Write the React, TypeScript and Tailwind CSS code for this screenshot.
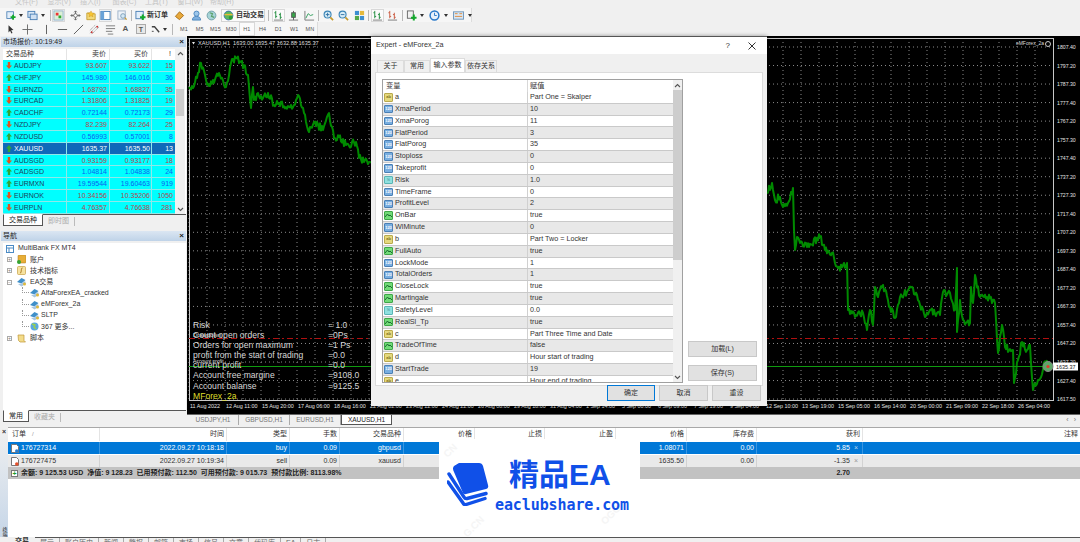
import React from 'react';

type Row = { sym: string; bid: string; ask: string; spread: string; dir: 'up' | 'down'; selected?: boolean };

const marketRows: Row[] = [
    { sym: 'AUDJPY', bid: '93.607', ask: '93.622', spread: '15', dir: 'down' },
    { sym: 'CHFJPY', bid: '145.980', ask: '146.016', spread: '36', dir: 'up' },
    { sym: 'EURNZD', bid: '1.68792', ask: '1.68827', spread: '35', dir: 'down' },
    { sym: 'EURCAD', bid: '1.31806', ask: '1.31825', spread: '19', dir: 'down' },
    { sym: 'CADCHF', bid: '0.72144', ask: '0.72173', spread: '29', dir: 'up' },
    { sym: 'NZDJPY', bid: '82.239', ask: '82.264', spread: '25', dir: 'down' },
    { sym: 'NZDUSD', bid: '0.56993', ask: '0.57001', spread: '8', dir: 'up' },
    { sym: 'XAUUSD', bid: '1635.37', ask: '1635.50', spread: '13', dir: 'up', selected: true },
    { sym: 'AUDSGD', bid: '0.93159', ask: '0.93177', spread: '18', dir: 'down' },
    { sym: 'CADSGD', bid: '1.04814', ask: '1.04838', spread: '24', dir: 'up' },
    { sym: 'EURMXN', bid: '19.59544', ask: '19.60463', spread: '919', dir: 'up' },
    { sym: 'EURNOK', bid: '10.34156', ask: '10.35206', spread: '1050', dir: 'down' },
    { sym: 'EURPLN', bid: '4.76357', ask: '4.76638', spread: '281', dir: 'down' },
];

type ParamKind = 'ab' | 'int' | 'dbl' | 'bool';

const params: [ParamKind, string, string][] = [
    ['ab', 'a', 'Part One = Skalper'],
    ['int', 'XmaPeriod', '10'],
    ['int', 'XmaPorog', '11'],
    ['int', 'FlatPeriod', '3'],
    ['int', 'FlatPorog', '35'],
    ['int', 'Stoploss', '0'],
    ['int', 'Takeprofit', '0'],
    ['dbl', 'Risk', '1.0'],
    ['int', 'TimeFrame', '0'],
    ['int', 'ProfitLevel', '2'],
    ['bool', 'OnBar', 'true'],
    ['int', 'WlMinute', '0'],
    ['ab', 'b', 'Part Two = Locker'],
    ['bool', 'FullAuto', 'true'],
    ['int', 'LockMode', '1'],
    ['int', 'TotalOrders', '1'],
    ['bool', 'CloseLock', 'true'],
    ['bool', 'Martingale', 'true'],
    ['dbl', 'SafetyLevel', '0.0'],
    ['bool', 'RealSl_Tp', 'true'],
    ['ab', 'c', 'Part Three Time and Date'],
    ['bool', 'TradeOfTime', 'false'],
    ['ab', 'd', 'Hour start of trading'],
    ['int', 'StartTrade', '19'],
    ['ab', 'e', 'Hour end of trading'],
];

const priceLabels = [
    '1807.40', '1797.20', '1787.30', '1777.40', '1767.20', '1757.30', '1747.40', '1737.20', '1727.30', '1717.40',
    '1707.20', '1697.30', '1687.40', '1677.20', '1667.30', '1657.40', '1647.20', '1637.20', '1627.40', '1617.50',
];

const timeLabels = [
    '11 Aug 2022', '12 Aug 11:00', '15 Aug 20:00', '17 Aug 06:00', '18 Aug 16:00', '22 Aug 02:00', '23 Aug 12:00', '24 Aug 22:00',
    '26 Aug 08:00', '29 Aug 18:00', '31 Aug 04:00', '1 Sep 14:00', '5 Sep 00:00', '6 Sep 09:00', '7 Sep 19:00', '9 Sep 04:00',
    '12 Sep 10:00', '13 Sep 19:00', '15 Sep 05:00', '16 Sep 14:00', '20 Sep 00:00', '21 Sep 09:00', '22 Sep 18:00', '26 Sep 04:00',
];

// rough trace of the price curve, in page pixels
const curve: [number, number][] = [
    [189, 87], [193, 88], [201, 63], [206, 80], [210, 86], [219, 73], [226, 87], [231, 63], [236, 58], [241, 62], [248, 75], [251, 108],
    [253, 87], [254, 100], [258, 93], [263, 98], [268, 93], [274, 105], [279, 103], [286, 107], [294, 105], [298, 95], [304, 113], [309, 132],
    [314, 122], [323, 130], [329, 113], [334, 138], [339, 137], [346, 145], [356, 142], [359, 158], [369, 162], [767, 193], [772, 183], [775, 200],
    [780, 197], [783, 207], [788, 203], [793, 188], [794, 230], [795, 250], [797, 237], [807, 247], [820, 237], [825, 250], [832, 253], [838, 268],
    [847, 263], [848, 310], [855, 317], [863, 313], [867, 330], [870, 310], [873, 325], [875, 287], [878, 297], [883, 285], [890, 307], [895, 318],
    [900, 297], [907, 292], [913, 288], [920, 305], [925, 317], [930, 310], [940, 315], [943, 292], [950, 293], [955, 310], [957, 268], [957, 332],
    [960, 300], [963, 320], [970, 323], [971, 287], [973, 303], [975, 275], [980, 297], [987, 297], [995, 303], [998, 353], [1002, 325], [1005, 347],
    [1013, 350], [1014, 383], [1018, 360], [1022, 342], [1027, 350], [1030, 345], [1033, 390], [1038, 380], [1047, 360],
];

const jitteredCurve = () => {
    let seed = 7;
    const next = () => {
        seed = (seed * 16807) % 2147483647;
        return (seed % 1000) / 1000 - 0.5;
    };
    const out: string[] = [];
    curve.forEach(([x, y], i) => {
        out.push(`${x},${y}`);
        const following = curve[i + 1];
        if (!following || following[0] - x > 100) return;
        const steps = Math.floor(Math.abs(following[0] - x));
        for (let s = 1; s < steps; s++) {
            const t = s / steps;
            out.push(`${x + (following[0] - x) * t},${y + (following[1] - y) * t + next() * 8}`);
        }
    });
    return out.join(' ');
};

const Tool = ({ w, children, pressed }: { w: string; children?: React.ReactNode; pressed?: boolean }) => (
    <div className={`${w} h-[14px] flex items-center justify-center shrink-0`}>
        {pressed ? (
            <div className="w-[13px] h-[13px] bg-[#fbfbfb] border border-[#d8d8d8] flex items-center justify-center">{children}</div>
        ) : children}
    </div>
);

const Sep = ({ w }: { w: string }) => (
    <div className={`${w} h-[14px] flex items-center justify-center shrink-0`}>
        <div className="w-px h-[11px] bg-[#b8b8b8]" />
    </div>
);

const Caret = () => <div className="w-0 h-0 border-x-[2px] border-x-transparent border-t-[3px] border-t-[#333]" />;

const Ic = ({ children }: { children: React.ReactNode }) => (
    <svg width="11" height="11" viewBox="0 0 12 12" fill="none">{children}</svg>
);

const DocPlus = () => (
    <Ic>
        <rect x="1" y="1.5" width="8" height="8" fill="#e3eefa" stroke="#4a7fb5" />
        <path d="M8.5 5v6M5.5 8h6" stroke="#13a82c" strokeWidth="2.2" />
    </Ic>
);
const Windows = () => (
    <Ic>
        <rect x="1" y="1.5" width="7.5" height="6.5" fill="#dbe8f6" stroke="#4a7fb5" />
        <rect x="3.5" y="4.5" width="7.5" height="6" fill="#cfe0f2" stroke="#4a7fb5" />
    </Ic>
);
const Magnifier = ({ sign }: { sign?: string }) => (
    <Ic>
        <circle cx="5" cy="5" r="3.8" fill="#d6ecf7" stroke="#3d86b8" strokeWidth="1.2" />
        <path d="M8 8l3 3" stroke="#c59a2e" strokeWidth="1.8" />
        {sign === '+' && <path d="M5 3v4M3 5h4" stroke="#2f6ea3" />}
        {sign === '-' && <path d="M3 5h4" stroke="#2f6ea3" />}
    </Ic>
);
const Bars = ({ color }: { color: string }) => (
    <Ic>
        <path d="M3 1v8M1.5 3H3M3 7h1.5M8 3v7M6.5 5H8M8 8h1.5" stroke={color} />
        <path d="M1 11h10" stroke="#777" />
    </Ic>
);

const ToolbarOne = () => (
    <div className="flex h-[14px] w-[472px] pl-[6px] bg-[#f6f6f6] border-r border-[#dcdcdc]">
        <Tool w="w-[10px]"><DocPlus /></Tool>
        <Tool w="w-[10px]"><Caret /></Tool>
        <Tool w="w-[12px]"><Windows /></Tool>
        <Tool w="w-[10px]"><Caret /></Tool>
        <Sep w="w-[4px]" />
        <Tool w="w-[12px]" pressed>
            <Ic><rect x="1" y="1" width="10" height="10" fill="#dcefd8" stroke="#8fb0c9" /><path d="M3 3h3v3H3z" fill="#e33" /><path d="M6 6h3v3H6z" fill="#3a3" /></Ic>
        </Tool>
        <Tool w="w-[22px]">
            <Ic><path d="M6 1v10M1 6h10M4.5 2.5L6 1l1.5 1.5M4.5 9.5L6 11l1.5-1.5M2.5 4.5L1 6l1.5 1.5M9.5 4.5L11 6 9.5 7.5" stroke="#666" /><circle cx="6" cy="6" r="2" fill="#fff" stroke="#666" /></Ic>
        </Tool>
        <Tool w="w-[10px]">
            <Ic><path d="M1 3h4l1 1h5v7H1z" fill="#f3d978" stroke="#c29a2c" /><path d="M6 .5l1.2 2.400 2.600.3-1.900 1.800.5 2.600L6 6.300 3.600 7.600l.5-2.600L2.200 3.200l2.600-.3z" fill="#f7c531" stroke="#c88d1c" strokeWidth=".5" /></Ic>
        </Tool>
        <Tool w="w-[18px]" pressed>
            <Ic><rect x="1" y="1.5" width="10" height="9" fill="#fff" stroke="#3d78b5" /><path d="M1 1.5h3.500v9H1z" fill="#6aa3d8" /></Ic>
        </Tool>
        <Tool w="w-[16px]">
            <Ic><rect x="1" y="1" width="8" height="9" fill="#eef3f8" stroke="#9db3c8" /><circle cx="6.5" cy="6.5" r="2.5" fill="#d5e9f5" stroke="#7a9cb8" /><path d="M8.5 8.5l2 2" stroke="#c79a33" strokeWidth="1.4" /></Ic>
        </Tool>
        <Sep w="w-[2px]" />
        <div className="w-[38px] h-[14px] flex items-center pl-[3px] gap-[1px] shrink-0">
            <DocPlus />
            <span className="text-[7px] font-bold text-[#333] whitespace-nowrap">新订单</span>
        </div>
        <Tool w="w-[18px]">
            <Ic><path d="M1.5 7L6 2l4.500 4L6 10.500z" fill="#e8a93b" stroke="#a8701a" /></Ic>
        </Tool>
        <Tool w="w-[16px]">
            <Ic><circle cx="6" cy="4" r="2.8" fill="#9dc6ea" stroke="#4a86bd" /><path d="M1.5 11c0-3 2-4 4.500-4s4.500 1 4.500 4z" fill="#7fb0df" stroke="#4a86bd" /></Ic>
        </Tool>
        <Tool w="w-[14px]">
            <Ic><circle cx="6" cy="6" r="4.8" fill="#a7d4d8" stroke="#6f9ea6" /><path d="M4 3l3 1-1 3 3 1" stroke="#5aa06a" strokeWidth="1.3" /></Ic>
        </Tool>
        <div className="w-[3px] shrink-0" />
        <div className="w-[44px] h-[13px] mt-[0.5px] bg-[#fbfbfb] border border-[#d4d4d4] flex items-center pl-[1px] gap-[2px] shrink-0">
            <Ic><circle cx="6" cy="6" r="4.8" fill="#5cb85c" stroke="#3b6fb0" /><path d="M1.5 5h9" stroke="#e8b93a" strokeWidth="1.5" /><circle cx="8.5" cy="8.5" r="2.2" fill="#2e9b35" /></Ic>
            <span className="text-[7px] font-bold text-[#333] whitespace-nowrap">自动交易</span>
        </div>
        <Sep w="w-[6px]" />
        <Tool w="w-[15px]" pressed><Bars color="#1d8a3a" /></Tool>
        <Tool w="w-[15px]">
            <Ic><path d="M6 1v10" stroke="#555" /><rect x="4" y="3" width="4" height="5" fill="#38a84a" stroke="#555" /><path d="M1 11h10" stroke="#777" /></Ic>
        </Tool>
        <Tool w="w-[16px]">
            <Ic><path d="M1 1v10h10" stroke="#777" /><path d="M2 9l2.500-5L7 6l3-1" stroke="#2e9b5a" /></Ic>
        </Tool>
        <Sep w="w-[3px]" />
        <Tool w="w-[16px]"><Magnifier sign="+" /></Tool>
        <Tool w="w-[15px]"><Magnifier sign="-" /></Tool>
        <Tool w="w-[16px]">
            <Ic><path d="M1 1h4.500v4.500H1z" fill="#3d8fd1" /><path d="M6.5 1H11v4.500H6.500z" fill="#e4b93d" /><path d="M1 6.5h4.500V11H1z" fill="#55a94a" /><path d="M6.5 6.500H11V11H6.500z" fill="#3d8fd1" /></Ic>
        </Tool>
        <Sep w="w-[2px]" />
        <Tool w="w-[16px]" pressed><Bars color="#1d8a3a" /></Tool>
        <Tool w="w-[15px]"><Bars color="#c8553a" /></Tool>
        <Sep w="w-[4px]" />
        <Tool w="w-[15px]">
            <Ic><rect x="1.5" y="1" width="6.5" height="8" fill="#f1f1f1" stroke="#666" /><path d="M8.5 5v6.500M5.500 8.500h6" stroke="#13a82c" strokeWidth="2.2" /></Ic>
        </Tool>
        <Tool w="w-[6px]"><Caret /></Tool>
        <Tool w="w-[18px]">
            <Ic><circle cx="6" cy="6" r="4.8" fill="#e8f1fb" stroke="#2878c8" strokeWidth="1.6" /><path d="M6 3v3h2.500" stroke="#2878c8" /></Ic>
        </Tool>
        <Tool w="w-[6px]"><Caret /></Tool>
        <Tool w="w-[18px]">
            <Ic><rect x=".5" y="2" width="11" height="8" fill="#d9e8f5" stroke="#6d94b8" /><path d="M2 4h3M7 4h3M2 7h8" stroke="#e08a3a" /></Ic>
        </Tool>
        <Tool w="w-[6px]"><Caret /></Tool>
    </div>
);

const tfItems = ['M1', 'M5', 'M15', 'M30', 'H1', 'H4', 'D1', 'W1', 'MN'];

const ToolbarTwo = () => (
    <div className="flex h-[14px] w-[318px] pl-[6px] bg-[#f6f6f6] border-r border-[#dcdcdc]">
        <Tool w="w-[10px]"><Ic><path d="M3 1l6 5.500-2.800.3 1.600 3.400-1.300.6-1.600-3.400L3 9.500z" fill="#333" /></Ic></Tool>
        <Tool w="w-[22px]"><Ic><path d="M6 .5v11M.5 6h11" stroke="#666" /></Ic></Tool>
        <Tool w="w-[16px]"><Ic><path d="M6 1v10" stroke="#555" /></Ic></Tool>
        <Tool w="w-[16px]"><Ic><path d="M1 6h10" stroke="#555" /></Ic></Tool>
        <Tool w="w-[16px]"><Ic><path d="M1 11L11 1" stroke="#555" /></Ic></Tool>
        <Tool w="w-[16px]">
            <Ic><path d="M1 10L9 2M3 11l8-8M1 7l6-6" stroke="#777" strokeDasharray="1 1" /><circle cx="3" cy="9" r="1" fill="#c33" /><circle cx="9" cy="3" r="1" fill="#c33" /></Ic>
        </Tool>
        <Tool w="w-[16px]"><Ic><path d="M1 2h10M1 5h10M1 8h7M3 11h6" stroke="#777" /></Ic></Tool>
        <Tool w="w-[15px]"><span className="text-[8px] font-bold text-[#555] leading-none">A</span></Tool>
        <Tool w="w-[16px]">
            <div className="w-[10px] h-[10px] bg-[#e8e8e8] border border-[#aaa] flex items-center justify-center text-[7px] font-bold text-[#555] leading-none">T</div>
        </Tool>
        <Tool w="w-[19px]">
            <div className="flex items-center gap-[2px]">
                <Ic><path d="M2 3h3l5 6" stroke="#444" strokeWidth="1.5" /><path d="M2 8h2" stroke="#444" /></Ic>
                <Caret />
            </div>
        </Tool>
        <Sep w="w-[8px]" />
        {tfItems.map(tf => (
            <div
                key={tf}
                className={`w-[15.75px] h-[14px] flex items-center justify-center shrink-0 text-[5.5px] text-[#555] ${tf === 'H1' ? 'bg-[#fbfbfb] border border-[#d8d8d8]' : ''}`}
            >
                {tf}
            </div>
        ))}
    </div>
);

const TitleBar = ({ title }: { title: string }) => (
    <div className="h-[10px] mx-[1px] bg-gradient-to-b from-[#dbe6f2] to-[#bfd3e8] flex items-center justify-between px-[2px] text-[7px] text-[#222] shrink-0">
        <span className="whitespace-nowrap">{title}</span>
        <span className="font-bold text-[8px] leading-none">×</span>
    </div>
);

const Trend = ({ dir }: { dir: 'up' | 'down' }) => (
    <svg width="6" height="7" viewBox="0 0 6 7" className="shrink-0">
        {dir === 'up' ? (
            <path d="M3 0L6 3.500H4.200V7H1.800V3.500H0z" fill="#35a535" />
        ) : (
            <path d="M3 7L6 3.500H4.200V0H1.800V3.500H0z" fill="#e2541f" />
        )}
    </svg>
);

const ScrollChevron = ({ up }: { up?: boolean }) => (
    <svg width="7" height="5" viewBox="0 0 7 5" fill="none" className="shrink-0">
        <path d={up ? 'M1 4l2.500-2.500L6 4' : 'M1 1l2.500 2.500L6 1'} stroke="#555" strokeWidth="1.1" />
    </svg>
);

const PanelTabs = ({ active, other }: { active: string; other: string }) => (
    <div className="h-[13px] flex border-t border-[#555] ml-[3px] mr-[1px] text-[7px] shrink-0">
        <div className="h-[12px] -mt-px px-[5px] bg-white border border-[#555] border-t-white text-[#222] flex items-center whitespace-nowrap">{active}</div>
        <div className="px-[5px] text-[#aaa] flex items-center border-r border-[#bbb] h-[9px] mt-[2px] whitespace-nowrap">{other}</div>
    </div>
);

const MarketWatch = () => (
    <div className="h-[192px] flex flex-col pt-[1px] shrink-0">
        <TitleBar title="市场报价: 10:19:49" />
        <div className="flex h-[165px] mt-[2px] ml-[3px] mr-[1px] bg-white shrink-0">
            <div className="w-[172px] shrink-0">
                <div className="grid grid-cols-[64px_43px_42px_23px] h-[11px] items-center text-[7px] text-[#333] bg-white">
                    <div className="pl-[3px] h-full flex items-center border-r border-[#e4e4e4]">交易品种</div>
                    <div className="text-right pr-[3px] h-full flex items-center justify-end border-r border-[#e4e4e4]">卖价</div>
                    <div className="text-right pr-[3px] h-full flex items-center justify-end border-r border-[#e4e4e4]">买价</div>
                    <div className="text-right pr-[4px]">!</div>
                </div>
                {marketRows.map(r => {
                    const tone = r.selected ? 'text-white' : r.dir === 'up' ? 'text-[#0b62f0]' : 'text-[#b5474f]';
                    return (
                        <div
                            key={r.sym}
                            className={`grid grid-cols-[64px_43px_42px_23px] h-[11.83px] items-center text-[7px] leading-none border-b border-[#8fe8e8] ${r.selected ? 'bg-[#0f69b9] text-white' : 'bg-[#00ffff] text-[#1c3f5c]'}`}
                        >
                            <div className="flex items-center gap-[2px] pl-[3px] h-full border-r border-[#8fe8e8]">
                                <Trend dir={r.dir} />
                                <span>{r.sym}</span>
                            </div>
                            <div className={`pr-[2px] h-full flex items-center justify-end border-r border-[#8fe8e8] ${tone}`}>{r.bid}</div>
                            <div className={`pr-[1px] h-full flex items-center justify-end border-r border-[#8fe8e8] ${tone}`}>{r.ask}</div>
                            <div className={`text-right pr-[2px] ${tone}`}>{r.spread}</div>
                        </div>
                    );
                })}
            </div>
            <div className="w-[10px] flex flex-col items-center bg-[#f0f0f0] py-[2px]">
                <ScrollChevron up />
                <div className="w-[8px] h-[27px] bg-[#cdcdcd] mt-[33px] shrink-0" />
                <div className="mt-auto"><ScrollChevron /></div>
            </div>
        </div>
        <PanelTabs active="交易品种" other="即时图" />
    </div>
);

const ExpertIcon = () => (
    <svg width="11" height="10" viewBox="0 0 11 10" className="shrink-0">
        <path d="M1 5l4.500-4 4 2-4 3.500z" fill="#3f8fc9" />
        <path d="M2 7l3.500 2.500L10 6.500 9 4 5.500 6.500z" fill="#a9c7e0" />
        <circle cx="8.5" cy="7" r="1.5" fill="#e0b93a" />
    </svg>
);

const TreeBox = ({ open }: { open?: boolean }) => (
    <span className="w-[5px] h-[5px] border border-[#aaa] bg-white flex items-center justify-center text-[5px] leading-none text-[#777] shrink-0">
        {open ? '−' : '+'}
    </span>
);

const Leaf = ({ label, icon }: { label: string; icon: React.ReactNode }) => (
    <div className="h-[11.2px] flex items-center pl-[22px]">
        <span className="w-[7px] h-[6px] -mt-[6px] border-l border-b border-dotted border-[#999] shrink-0" />
        <span className="w-[11px] flex justify-center shrink-0">{icon}</span>
        <span className="ml-[1px] whitespace-nowrap">{label}</span>
    </div>
);

const Branch = ({ label, icon, open }: { label: string; icon: React.ReactNode; open?: boolean }) => (
    <div className="h-[11.2px] flex items-center pl-[7px] gap-[4px]">
        <TreeBox open={open} />
        <span className="w-[10px] flex justify-center shrink-0">{icon}</span>
        <span className="whitespace-nowrap">{label}</span>
    </div>
);

const Navigator = () => (
    <div className="flex-1 flex flex-col min-h-0 pt-[3px]">
        <TitleBar title="导航" />
        <div className="h-[167px] mt-[2px] ml-[3px] mr-[1px] bg-white text-[7px] text-[#333] overflow-hidden shrink-0">
            <div className="-ml-[3px]">
                <div className="h-[11.2px] flex items-center pl-[6px] gap-[4px]">
                    <svg width="8" height="8" viewBox="0 0 8 8" fill="none"><rect x=".5" y=".5" width="7" height="7" stroke="#4a8ac4" /><path d="M.5 3h7M3 3v4.500" stroke="#4a8ac4" /></svg>
                    <span>MultiBank FX MT4</span>
                </div>
                <Branch
                    label="账户"
                    icon={<svg width="9" height="9" viewBox="0 0 9 9"><rect x="1" y="0" width="8" height="8" rx="1" fill="#e7ae38" stroke="#a8751c" strokeWidth=".5" /><circle cx="2" cy="7" r="2" fill="#33a533" /></svg>}
                />
                <Branch
                    label="技术指标"
                    icon={<svg width="9" height="9" viewBox="0 0 9 9"><rect x=".5" y=".5" width="8" height="8" rx="1" fill="#f6e2a0" stroke="#c5a043" strokeWidth=".7" /><path d="M5.500 2c-1.200 0-1 1-1.200 2.500S4 7 3 7" stroke="#a8751c" fill="none" /></svg>}
                />
                <Branch label="EA交易" icon={<ExpertIcon />} open />
                <Leaf label="AlfaForexEA_cracked" icon={<ExpertIcon />} />
                <Leaf label="eMForex_2a" icon={<ExpertIcon />} />
                <Leaf label="SLTP" icon={<ExpertIcon />} />
                <Leaf
                    label="367 更多..."
                    icon={<svg width="9" height="9" viewBox="0 0 9 9"><circle cx="4.500" cy="4.500" r="4" fill="#5aa7e0" /><path d="M2 2l3 1-1 2 2 2" stroke="#9ad04b" strokeWidth="1.4" fill="none" /></svg>}
                />
                <Branch
                    label="脚本"
                    icon={<svg width="9" height="9" viewBox="0 0 9 9"><path d="M1 1h6v5.500L8.500 8H3L1.500 6.500z" fill="#f3dc8a" stroke="#bf9636" strokeWidth=".7" /></svg>}
                />
            </div>
        </div>
        <PanelTabs active="常用" other="收藏夹" />
    </div>
);

const overlayRows: [string, string][] = [
    ['Risk', '= 1.0'],
    ['Count open orders', '=0Ps'],
    ['Orders for open maximum', '=1 Ps'],
    ['profit from the start of trading', '=0.0'],
    ['current profit', '=0.0'],
    ['Account free margine', '=9108.0'],
    ['Account balanse', '=9125.5'],
];

const EaOverlay = () => (
    <div className="absolute left-[6px] top-[283.5px] w-[190px] text-[8.6px] leading-[10.2px] text-[#d8d8d8]">
        {overlayRows.map(([label, value]) => (
            <div key={label} className="relative flex h-[10.2px] whitespace-nowrap">
                <span className="w-[135px]">{label}</span>
                <span>{value}</span>
                {label === 'Count open orders' && <span className="absolute left-0 top-[2px] text-[6px] leading-[7px]">Drawdown</span>}
                {label === 'current profit' && <span className="absolute left-0 top-[-2px] text-[5px] leading-[6px]">Account profit</span>}
            </div>
        ))}
        <div className="text-[#dede2a] h-[10.2px]">MForex_2a</div>
    </div>
);

const Chart = () => {
    const gridX = Array.from({ length: 48 }, (_, i) => 189 + 18 * i);
    const gridY = Array.from({ length: 20 }, (_, i) => 47 + 18.53 * i);
    return (
        <div className="relative h-[378px] bg-black overflow-hidden">
            <svg viewBox="187 36 893 378" className="block w-full h-full">
                {gridX.map(x => <line key={x} x1={x} x2={x} y1={38} y2={400} stroke="#8a8a8a" strokeWidth="1" strokeDasharray="1 3" />)}
                {gridY.map(y => <line key={y} x1={189} x2={1053} y1={y} y2={y} stroke="#8a8a8a" strokeWidth="1" strokeDasharray="1 3" />)}
                <rect x="189.5" y="38.5" width="864" height="362" fill="none" stroke="#c8c8c8" />
                <polyline points={jitteredCurve()} fill="none" stroke="#008a00" strokeWidth="2" strokeLinejoin="round" />
                <line x1="189" x2="1053" y1="338.5" y2="338.5" stroke="#b01010" strokeDasharray="6 3 2 3" />
                <line x1="189" x2="1053" y1="366.5" y2="366.5" stroke="#0f9a0f" />
                {priceLabels.map((p, i) => (
                    <text key={p + i} x="1057" y={47 + 18.53 * i + 2} fill="#e4e4e4" fontSize="5.2" fontFamily="Liberation Sans">{p}</text>
                ))}
                {timeLabels.map((t, i) => (
                    <text key={t} x={190 + 36 * i} y="408" fill="#e4e4e4" fontSize="5.4" fontFamily="Liberation Sans">{t}</text>
                ))}
                <rect x="1053" y="362.5" width="25" height="8" fill="#fff" />
                <text x="1056" y="368.5" fill="#111" fontSize="5.4" fontFamily="Liberation Sans">1635.37</text>
                <circle cx="1048" cy="366.5" r="5" fill="#5fa868" stroke="#888" />
                <circle cx="1048" cy="366.5" r="1.6" fill="#e23a2a" />
                <path d="M192 42l3 0-1.500 2.500z" fill="#e8e8e8" />
            </svg>
            <div className="absolute left-[11px] top-[4px] text-[5.6px] leading-[7px] text-[#dcdcdc] whitespace-nowrap">
                XAUUSD,H1&nbsp; 1633.00 1635.47 1632.88 1635.37
            </div>
            <div className="absolute right-[29px] top-[4px] flex items-center gap-[1px] text-[5px] leading-[7px] text-[#dcdcdc] whitespace-nowrap">
                eMForex_2a
                <span className="w-[6px] h-[6px] rounded-full border border-[#ccc]" />
            </div>
            <EaOverlay />
        </div>
    );
};

const chartTabs = ['USDJPY,H1', 'GBPUSD,H1', 'EURUSD,H1', 'XAUUSD,H1'];

const ChartTabs = () => (
    <div className="h-[13px] flex items-start border-t border-[#666] bg-[#f0f0f0] pl-[1px]">
        {chartTabs.map(t => (
            <div
                key={t}
                className={`w-[51px] h-[10px] flex items-center justify-center text-[6.5px] ${t === 'XAUUSD,H1' ? 'bg-white border-x border-b border-[#555] text-[#222]' : 'text-[#777] border-r border-[#aaa]'}`}
            >
                {t}
            </div>
        ))}
        <div className="ml-auto mr-[4px] flex gap-[5px] text-[7px] text-[#777] leading-[10px]">
            <span>‹</span>
            <span>›</span>
        </div>
    </div>
);

const ParamIcon = ({ kind }: { kind: ParamKind }) => {
    const cfg: Record<ParamKind, string> = {
        ab: 'bg-[#e4d97e] border-[#b9a94c] text-[#7c6a1c]',
        int: 'bg-[#78aee0] border-[#4a80b5] text-[#fff]',
        dbl: 'bg-[#8fe0df] border-[#58b5b5] text-[#2c7f86]',
        bool: 'bg-[#71db77] border-[#3ea648] text-[#1c6a26]',
    };
    const label = { ab: 'ab', int: '123', dbl: '½', bool: '' }[kind];
    return (
        <span className={`w-[9px] h-[8.5px] rounded-[1px] border flex items-center justify-center text-[4px] font-bold leading-none shrink-0 ${cfg[kind]}`}>
            {kind === 'bool' ? (
                <svg width="7" height="5" viewBox="0 0 7 5" fill="none"><path d="M0 4l2.500-3L4 3l1-1 2 2" stroke="#14602a" strokeWidth=".9" /></svg>
            ) : label}
        </span>
    );
};

const DlgButton = ({ label, w, primary }: { label: string; w: string; primary?: boolean }) => (
    <div className={`${w} h-[16px] flex items-center justify-center text-[7px] text-[#333] bg-[#e1e1e1] border ${primary ? 'border-[#0078d7] border-[1.5px]' : 'border-[#c8c8c8]'}`}>
        {label}
    </div>
);

const ExpertDialog = () => (
    <div className="absolute left-[371px] top-[36px] w-[396px] h-[370px] bg-[#f0f0f0] border-t border-[#555] flex flex-col text-[#333] shadow-[0_0_4px_rgba(0,0,0,0.4)]">
        <div className="h-[17px] bg-white flex items-center pl-[5px] text-[7.2px] shrink-0">
            <span>Expert - eMForex_2a</span>
            <span className="ml-auto mr-[18px] text-[8px]">?</span>
            <svg width="8" height="8" viewBox="0 0 8 8" className="mr-[11px]" fill="none"><path d="M.5.5l7 7M7.500.5l-7 7" stroke="#333" /></svg>
        </div>
        <div className="flex items-end h-[18px] pl-[6px] text-[7px] shrink-0">
            <div className="w-[27px] h-[12px] flex items-center justify-center bg-[#f0f0f0] border border-b-0 border-[#dcdcdc]">关于</div>
            <div className="w-[26px] h-[12px] flex items-center justify-center bg-[#f0f0f0] border border-b-0 border-[#dcdcdc]">常用</div>
            <div className="w-[35px] h-[14px] flex items-center justify-center bg-white border border-b-0 border-[#dcdcdc]">输入参数</div>
            <div className="w-[32px] h-[12px] flex items-center justify-center bg-[#f0f0f0] border border-b-0 border-[#dcdcdc]">依存关系</div>
        </div>
        <div className="h-[314px] mx-[4px] bg-white border border-[#dcdcdc] flex pl-[6px] pt-[6px] shrink-0">
            <div className="w-[301px] h-[304px] flex border border-[#a0a0a0] overflow-hidden shrink-0">
                <div className="flex-1 min-w-0 text-[7.2px]">
                    <div className="h-[12px] flex items-center bg-white">
                        <div className="w-[145px] pl-[3px] h-full flex items-center border-r border-[#d8d8d8]">变量</div>
                        <div className="pl-[2px]">赋值</div>
                    </div>
                    {params.map(([kind, name, value], i) => (
                        <div key={name} className={`h-[11.83px] flex items-center border-b border-[#c9c9c9] ${i % 2 === 1 ? 'bg-[#e8e8e8]' : 'bg-white'}`}>
                            <div className="w-[145px] h-full flex items-center gap-[2px] pl-[1px] border-r border-[#d0d0d0] shrink-0">
                                <ParamIcon kind={kind} />
                                <span className="whitespace-nowrap">{name}</span>
                            </div>
                            <div className="pl-[2px] whitespace-nowrap">{value}</div>
                        </div>
                    ))}
                </div>
                <div className="w-[9px] bg-[#f0f0f0] flex flex-col items-center shrink-0">
                    <div className="h-[10px] flex items-center"><ScrollChevron up /></div>
                    <div className="w-full h-[170px] bg-[#cdcdcd]" />
                    <div className="mt-auto h-[10px] flex items-center"><ScrollChevron /></div>
                </div>
            </div>
            <div className="flex flex-col gap-[8px] ml-[5px] mt-[262px]">
                <DlgButton label="加载(L)" w="w-[69px]" />
                <DlgButton label="保存(S)" w="w-[69px]" />
            </div>
        </div>
        <div className="flex justify-end gap-[4px] pr-[6px] -mt-[1px]">
            <DlgButton label="确定" w="w-[48px]" primary />
            <DlgButton label="取消" w="w-[49px]" />
            <DlgButton label="重设" w="w-[49px]" />
        </div>
    </div>
);

const termCols = 'grid grid-cols-[92px_127px_63px_50px_64px_71px_70px_71px_71px_70px_106px_1fr]';

const Cell = ({ children, line }: { children?: React.ReactNode; line: string }) => (
    <div className={`h-full flex items-center justify-end pr-[2px] border-r ${line} whitespace-nowrap`}>{children}</div>
);

const OrderRow = ({ id, time, type, symbol, price, profit, selected }: { id: string; time: string; type: string; symbol: string; price: string; profit: string; selected?: boolean }) => {
    const line = selected ? 'border-[#3a96e0]' : 'border-[#d2d2d2]';
    return (
        <div className={`${termCols} h-[12px] items-center text-[7px] mt-px ${selected ? 'bg-[#0078d7] text-white' : 'bg-[#e9e9e9] text-[#333]'}`}>
            <div className={`h-full flex items-center gap-[2px] pl-[3px] border-r ${line}`}>
                <svg width="8" height="9" viewBox="0 0 8 9"><path d="M.5.5h5l2 2v6h-7z" fill="#fff" stroke="#777" /><circle cx="5.8" cy="7" r="1.8" fill={selected ? '#2a7fd0' : '#e5502a'} /></svg>
                <span>{id}</span>
            </div>
            <Cell line={line}>{time}</Cell>
            <Cell line={line}>{type}</Cell>
            <Cell line={line}>0.09</Cell>
            <Cell line={line}>{symbol}</Cell>
            <Cell line={line} />
            <Cell line={line} />
            <Cell line={line} />
            <Cell line={line}>{price}</Cell>
            <Cell line={line}>0.00</Cell>
            <div className={`h-full flex items-center justify-end gap-[4px] pr-[4px] border-r ${line}`}>
                <span>{profit}</span>
                <span className={selected ? 'text-[#b8d4ee]' : 'text-[#999]'}>×</span>
            </div>
            <div />
        </div>
    );
};

const LogoStamp = () => (
    <div className="absolute left-[439px] top-[12px] w-[201px] h-[98px] bg-white overflow-hidden">
        <span className="absolute left-[4px] top-[4px] -rotate-45 text-[10px] text-[#f5f5f5] font-bold">CN</span>
        <span className="absolute left-[22px] top-[80px] -rotate-45 text-[10px] text-[#f5f5f5] font-bold">G.CN</span>
        <span className="absolute left-[160px] top-[68px] -rotate-45 text-[10px] text-[#f5f5f5] font-bold">OGO</span>
        <div className="relative flex items-start pl-[8px] pt-[17px]">
            <svg width="42" height="44" viewBox="0 0 42 44" className="mt-[6px] shrink-0" fill="none">
                <path d="M12 1h20q3 0 4 3l5 19q1 3-2 4l-20 5q-2 .5-3-1L7 10q-2-4 0-6z" fill="#1050e8" />
                <path d="M2 12l15 23q1 2 3 1.500l19-5" stroke="#1050e8" strokeWidth="3.4" strokeLinecap="round" />
                <path d="M1 20l15 21q1 2 3 1.500l19-6" stroke="#1050e8" strokeWidth="3.4" strokeLinecap="round" />
            </svg>
            <span className="ml-[20px] text-[30px] leading-[38px] font-bold text-[#1050e8] whitespace-nowrap">精品EA</span>
        </div>
        <div className="absolute left-[56px] top-[59px] text-[15px] leading-[15px] font-bold text-[#1050e8] [font-family:'DejaVu_Sans_Mono',monospace] tracking-[-0.1px] whitespace-nowrap">
            eaclubshare.com
        </div>
    </div>
);

const Terminal = () => (
    <div className="flex h-[110px] bg-white relative">
        <div className="w-[8px] bg-gradient-to-b from-[#f0f0f0] to-[#c6d6e8] flex flex-col items-center text-[7px] leading-none pt-[1px] shrink-0">
            <span className="font-bold">×</span>
            <span className="mt-auto [writing-mode:vertical-rl] text-[5px] text-[#222]">终端</span>
        </div>
        <div className="flex-1 min-w-0 border-t border-[#a8a8a8]">
            <div className={`${termCols} h-[13px] items-center text-[7px] text-[#333]`}>
                <div className="pl-[4px] h-full flex items-center gap-[6px] border-r border-[#e4e4e4]">订单 <span className="text-[#999] text-[6px]">/</span></div>
                {['时间', '类型', '手数', '交易品种', '价格', '止损', '止盈', '价格', '库存费', '获利'].map((h, i) => (
                    <Cell key={h + i} line="border-[#e4e4e4]">{h}</Cell>
                ))}
                <div className="text-right pr-[2px]">注释</div>
            </div>
            <OrderRow id="176727314" time="2022.09.27 10:18:18" type="buy" symbol="gbpusd" price="1.08071" profit="5.85" selected />
            <OrderRow id="176727475" time="2022.09.27 10:19:34" type="sell" symbol="xauusd" price="1635.50" profit="-1.35" />
            <div className={`${termCols} h-[12px] items-center text-[7px] font-bold text-[#222] bg-[#c2c2c2]`}>
                <div className="col-span-10 flex items-center gap-[3px] pl-[3px] whitespace-nowrap">
                    <span className="w-[7px] h-[7px] bg-white border border-[#777] flex items-center justify-center text-[#1a9a2a] text-[7px] leading-none">+</span>
                    <span>余额: 9 125.53 USD&nbsp; 净值: 9 128.23&nbsp; 已用预付款: 112.50&nbsp; 可用预付款: 9 015.73&nbsp; 预付款比例: 8113.98%</span>
                </div>
                <div className="text-right pr-[13px]">2.70</div>
                <div />
            </div>
        </div>
        <LogoStamp />
    </div>
);

const bottomTabs = ['展示', '账户历史', '新闻', '警报', '邮箱', '市场', '信号', '文章', '代码库', 'EA', '日志'];

const App = () => (
    <div className="relative w-[1080px] h-[542px] overflow-hidden bg-[#f0f0f0] text-[#333] [font-family:'Liberation_Sans','Noto_Sans_CJK_SC',sans-serif]">
        <div className="h-[8px] overflow-hidden flex pl-[15px] text-[7px] leading-[3px] text-[#c4c4c4]">
            {['文件(F)', '显示(V)', '插入(I)', '图表(C)', '工具(T)', '窗口(W)', '帮助(H)'].map(m => (
                <span key={m} className="w-[32.5px] shrink-0 whitespace-nowrap">{m}</span>
            ))}
        </div>
        <ToolbarOne />
        <ToolbarTwo />
        <div className="flex h-[391px]">
            <div className="w-[187px] shrink-0 flex flex-col">
                <MarketWatch />
                <Navigator />
            </div>
            <div className="flex-1 min-w-0">
                <Chart />
                <ChartTabs />
            </div>
        </div>
        <Terminal />
        <div className="h-[5px] flex overflow-hidden">
            <div className="w-[35px] pl-[15px] text-[7px] leading-[8px] font-bold shrink-0">交易</div>
            <div className="flex-1 flex text-[7px] leading-[9px] text-[#666] border-t border-[#555]">
                {bottomTabs.map(t => (
                    <span key={t} className="px-[5px] border-r border-[#aaa] whitespace-nowrap">{t}</span>
                ))}
            </div>
        </div>
        <ExpertDialog />
    </div>
);

export default App;
